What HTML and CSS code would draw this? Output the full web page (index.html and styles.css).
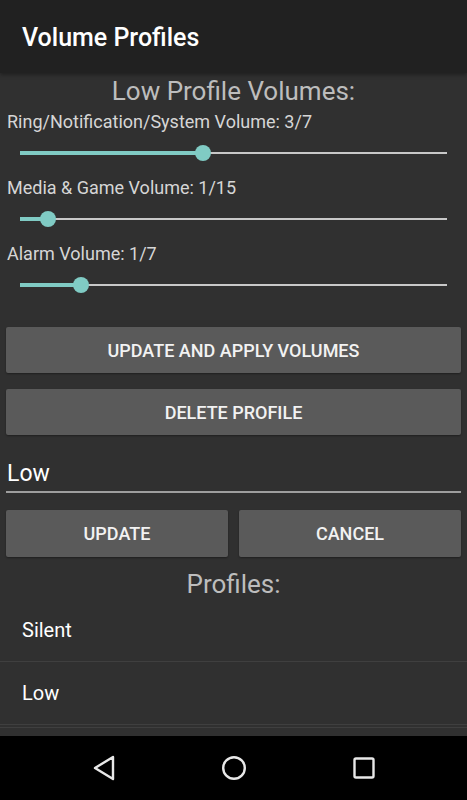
FILE: index.html
```html
<!DOCTYPE html>
<html lang="en">
<head>
    <meta charset="UTF-8">
    <title>Volume Profiles</title>
    <link rel="stylesheet" href="styles.css">
</head>
<body>
<div class="screen">
    <div class="appbar">Volume Profiles</div>

    <div class="content">
        <div class="heading">Low Profile Volumes:</div>

        <div class="label">Ring/Notification/System Volume: 3/7</div>
        <div class="slider">
            <div class="track">
                <div class="fill" style="width: 42.86%"></div>
                <div class="thumb" style="left: 42.86%"></div>
            </div>
        </div>

        <div class="label">Media &amp; Game Volume: 1/15</div>
        <div class="slider">
            <div class="track">
                <div class="fill" style="width: 6.67%"></div>
                <div class="thumb" style="left: 6.67%"></div>
            </div>
        </div>

        <div class="label">Alarm Volume: 1/7</div>
        <div class="slider">
            <div class="track">
                <div class="fill" style="width: 14.29%"></div>
                <div class="thumb" style="left: 14.29%"></div>
            </div>
        </div>

        <div class="btn btn-first">UPDATE AND APPLY VOLUMES</div>
        <div class="btn btn-next">DELETE PROFILE</div>

        <div class="edit">Low</div>

        <div class="btn-row">
            <div class="btn">UPDATE</div>
            <div class="btn">CANCEL</div>
        </div>

        <div class="heading heading-profiles">Profiles:</div>
    </div>

    <div class="list">
        <div class="list-item">Silent</div>
        <div class="list-item">Low</div>
        <div class="list-item"></div>
    </div>

    <div class="navbar">
        <div class="nav-key">
            <svg width="24" height="26" viewBox="0 0 24 26">
                <path d="M21 2 L3 13 L21 24 Z" fill="none" stroke="#e8e8e8" stroke-width="2.4" stroke-linejoin="round"/>
            </svg>
        </div>
        <div class="nav-key">
            <svg width="26" height="26" viewBox="0 0 26 26">
                <circle cx="13" cy="13" r="10.8" fill="none" stroke="#e8e8e8" stroke-width="2.4"/>
            </svg>
        </div>
        <div class="nav-key">
            <svg width="22" height="22" viewBox="0 0 22 22">
                <rect x="1.5" y="1.5" width="19" height="19" rx="1.5" fill="none" stroke="#e8e8e8" stroke-width="2.4"/>
            </svg>
        </div>
    </div>
</div>
</body>
</html>
```

FILE: styles.css
```css
html, body{
    margin: 0;
    padding: 0;
    background: #303030;
}
.screen{
    width: 467px;
    height: 800px;
    display: flex;
    flex-direction: column;
    overflow: hidden;
    font-family: Roboto, "Noto Sans", "Liberation Sans", sans-serif;
    color: #fafafa;
}

/*顶部标题栏*/
.appbar{
    height: 73px;
    flex: none;
    background: #212121;
    box-shadow: 0 2px 4px rgba(0, 0, 0, 0.35);
    padding-left: 22px;
    padding-top: 2px;
    box-sizing: border-box;
    display: flex;
    align-items: center;
    font-size: 25px;
    font-weight: 500;
    color: #fff;
    position: relative;
    z-index: 1;
}

.content{
    flex: none;
    padding: 0 6px;
}
.heading{
    margin-top: 3px;
    margin-bottom: 5px;
    line-height: 30px;
    font-size: 26px;
    text-align: center;
    color: #bdbdbd;
}
.heading-profiles{
    margin-top: 12px;
    margin-bottom: 0;
}
.label{
    line-height: 22px;
    font-size: 18px;
    color: #d6d6d6;
    padding-left: 1px;
}

/*滑动条*/
.slider{
    height: 44px;
    padding: 0 14px;
}
.track{
    position: relative;
    top: 19px;
    height: 2px;
    background: #c8c8c8;
}
.fill{
    position: absolute;
    left: 0;
    top: -1px;
    height: 4px;
    background: #80cbc4;
}
.thumb{
    position: absolute;
    top: -7px;
    width: 16px;
    height: 16px;
    margin-left: -8px;
    border-radius: 50%;
    background: #80cbc4;
}

/*按钮*/
.btn{
    height: 46px;
    display: flex;
    align-items: center;
    justify-content: center;
    background: #5a5a5a;
    border-radius: 2px;
    box-shadow: 0 1px 2px rgba(0, 0, 0, 0.35);
    font-size: 18px;
    font-weight: 500;
    color: #f2f2f2;
}
.btn-first{
    margin-top: 18px;
}
.btn-next{
    margin-top: 16px;
}
.btn-row{
    margin-top: 17px;
    display: flex;
    gap: 11px;
}
.btn-row .btn{
    flex: 1;
    height: 47px;
}

/*输入框*/
.edit{
    margin-top: 24px;
    line-height: 30px;
    padding-bottom: 2px;
    padding-left: 1px;
    font-size: 23px;
    color: #fff;
    border-bottom: 2px solid #9e9e9e;
}

/*列表*/
.list{
    flex: 1;
    overflow: hidden;
}
.list-item{
    height: 62px;
    display: flex;
    align-items: center;
    padding-left: 22px;
    font-size: 20px;
    color: #fff;
    border-bottom: 1px solid #3f3f3f;
}
.list-item:last-child{
    height: 1px;
    margin-top: 1px;
}

/*底部导航*/
.navbar{
    height: 64px;
    flex: none;
    background: #000;
    display: flex;
    align-items: center;
    justify-content: center;
}
.nav-key{
    width: 130px;
    display: flex;
    justify-content: center;
}
.nav-key svg{
    display: block;
}
```
